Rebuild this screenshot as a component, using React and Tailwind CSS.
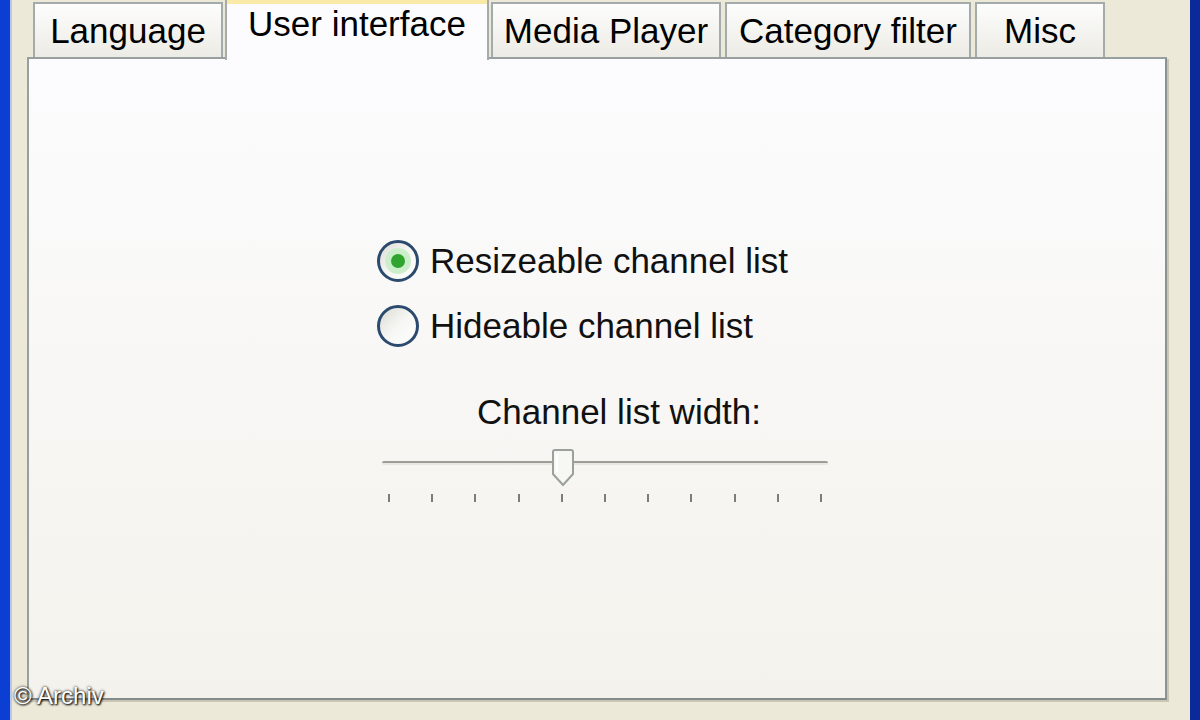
import React from 'react';

const TABS = [
  { label: 'Language', width: 'w-[190px]' },
  { label: 'User interface', width: 'w-[264px]', active: true },
  { label: 'Media Player', width: 'w-[230px]' },
  { label: 'Category filter', width: 'w-[246px]' },
  { label: 'Misc', width: 'w-[130px]' },
];

const TICKS = [0, 1, 2, 3, 4, 5, 6, 7, 8, 9, 10];

function Tab({ label, width, active }) {
  if (active) {
    return (
      <div
        className={`relative z-10 -mb-[3px] -mx-[2px] flex h-[60px] ${width} items-start justify-center border-x-2 border-[#a3abab] bg-[#fcfcfe] pt-[2px]`}
      >
        <div className="absolute inset-x-0 top-0 h-[4px] bg-[#fbe9a8]" />
        <span className="text-[35px] leading-[44px] text-black">{label}</span>
      </div>
    );
  }
  return (
    <div
      className={`flex h-[55px] ${width} items-start justify-center border-2 border-b-0 border-[#a3abab] bg-gradient-to-b from-[#fdfdfd] to-[#ecebe5] pt-[5px]`}
    >
      <span className="text-[35px] leading-[44px] text-black">{label}</span>
    </div>
  );
}

function Radio({ checked, label }) {
  return (
    <div className="flex items-center gap-[11px]">
      <div className="flex h-[42px] w-[42px] items-center justify-center rounded-full border-[3px] border-[#2b4a6e] bg-gradient-to-br from-[#dcdcd6] via-[#f6f6f3] to-white">
        {checked && (
          <div className="flex h-[26px] w-[26px] items-center justify-center rounded-full bg-[#cdeecb]">
            <div className="h-[14px] w-[14px] rounded-full bg-[#2fa52f]" />
          </div>
        )}
      </div>
      <span className="text-[35px] leading-[44px] text-[#111]">{label}</span>
    </div>
  );
}

function Slider() {
  return (
    <div className="flex w-[446px] flex-col">
      <div className="relative h-[40px]">
        <div className="absolute left-0 right-0 top-[13px] h-[4px] rounded-sm border-t-2 border-[#9d9d97] bg-[#e8e7e0]" />
        <svg className="absolute left-[169px] top-0" width="24" height="40" viewBox="0 0 24 40">
          <path
            d="M4 2 H20 Q22 2 22 4 V26 L12 37 L2 26 V4 Q2 2 4 2 Z"
            fill="#f7f7f4"
            stroke="#9aa09a"
            strokeWidth="2"
          />
          <path d="M6 6 V24" stroke="#ffffff" strokeWidth="2" />
        </svg>
      </div>
      <div className="mt-[6px] flex justify-between px-[6px]">
        {TICKS.map((t) => (
          <div key={t} className="h-[8px] w-[2px] bg-[#7d7d78]" />
        ))}
      </div>
    </div>
  );
}

export default function App() {
  return (
    <div
      className="flex h-[720px] w-[1200px] overflow-hidden bg-[#ece9d8]"
      style={{ fontFamily: '"Liberation Sans", Arial, sans-serif' }}
    >
      <div className="w-[10px] bg-[#0b3fd4]" />
      <div className="w-[2px] bg-[#b9c6f0]" />
      <div className="relative flex flex-1 flex-col pl-[15px] pr-[23px]">
        <div className="flex items-end pl-[6px] gap-[4px]">
          {TABS.map((t) => (
            <Tab key={t.label} {...t} />
          ))}
        </div>
        <div className="h-[643px] border-2 border-[#979f9f] border-r-[#8b9292] border-b-[#858b8b] bg-gradient-to-b from-[#fcfcfe] to-[#f4f2ec] shadow-[2px_2px_0_#c9c6b6]">
          <div className="ml-[348px] mt-[180px] flex flex-col gap-[21px]">
            <Radio checked label="Resizeable channel list" />
            <Radio label="Hideable channel list" />
          </div>
          <div className="ml-[353px] mt-[42px] flex flex-col">
            <div className="pl-[95px] text-[35px] leading-[44px] text-[#111]">Channel list width:</div>
            <div className="mt-[14px]">
              <Slider />
            </div>
          </div>
        </div>
        <div className="absolute bottom-[6px] left-[2px] text-[24px] text-white [text-shadow:0_0_3px_#000,1px_1px_2px_#000]">
          © Archiv
        </div>
      </div>
      <div className="w-[10px] bg-[#0a2a9c]" />
    </div>
  );
}
